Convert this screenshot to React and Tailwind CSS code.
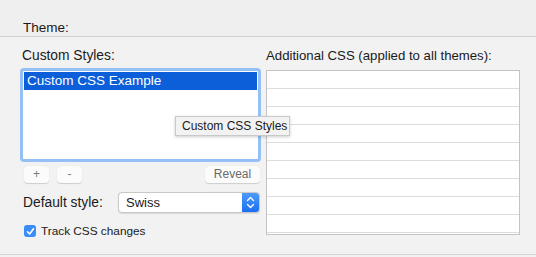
export default function App() {
  const rows = Array.from({ length: 9 })
  return (
    <div className="w-[536px] h-[257px] overflow-hidden bg-[#f2f2f2] text-[13px] text-[#1a1a1a] font-['Liberation_Sans',Arial,sans-serif] relative">
      <div className="h-[37px] bg-[#efefef] border-b border-[#d0d0d0] pl-[23px] pt-[20px] leading-[16px] text-[13.5px]">
        Theme:
      </div>

      <div className="flex gap-[5px] pl-[20px] pt-[10px] h-[218px] border-b border-[#d4d4d4]">
        <div className="w-[241px] flex flex-col">
          <div className="pl-[2px] leading-[18px] mb-[3px] text-[13.8px]">Custom Styles:</div>
          <div className="h-[94px] rounded-[4px] border-[3px] border-[#94c0f6] bg-white p-px">
            <div className="h-[18px] bg-[#0c5fd9] text-white pl-[3px] leading-[18px] text-[13.5px]">
              Custom CSS Example
            </div>
          </div>
          <div className="flex items-center mt-[4px] pl-[4px] pr-[1px]">
            <button className="w-[25px] h-[17px] rounded-[4px] bg-[#fbfbfb] shadow-[0_0.5px_1px_rgba(0,0,0,0.15)] text-[#7a7a7a] text-[12px] leading-[17px]">+</button>
            <button className="w-[25px] h-[17px] ml-[8px] rounded-[4px] bg-[#fbfbfb] shadow-[0_0.5px_1px_rgba(0,0,0,0.15)] text-[#7a7a7a] text-[12px] leading-[17px]">-</button>
            <button className="ml-auto w-[55px] h-[17px] rounded-[4px] bg-[#fbfbfb] shadow-[0_0.5px_1px_rgba(0,0,0,0.15)] text-[#6a6a6a] text-[12px] leading-[17px]">Reveal</button>
          </div>
          <div className="flex items-center mt-[9px] pl-[3px] pr-[1px]">
            <span className="w-[95px] leading-[21px] text-[13.8px]">Default style:</span>
            <div className="flex-1 h-[21px] flex rounded-[4px] border border-[#c8c8c8] bg-white overflow-hidden shadow-[0_0.5px_1px_rgba(0,0,0,0.1)]">
              <span className="flex-1 pl-[7px] leading-[19px]">Swiss</span>
              <div className="w-[17px] bg-gradient-to-b from-[#4e9af8] to-[#1a6ff0] flex items-center justify-center">
                <svg width="9" height="15" viewBox="0 0 9 15" fill="none" stroke="white" strokeWidth="1.4" strokeLinecap="round" strokeLinejoin="round">
                  <path d="M1.5 5.5 L4.5 2.5 L7.5 5.5" />
                  <path d="M1.5 9.5 L4.5 12.5 L7.5 9.5" />
                </svg>
              </div>
            </div>
          </div>
          <div className="flex items-center mt-[11px] pl-[4px]">
            <div className="w-[12px] h-[12px] rounded-[3px] bg-[#3a8cf6] flex items-center justify-center">
              <svg width="9" height="9" viewBox="0 0 9 9" fill="none" stroke="white" strokeWidth="1.6" strokeLinecap="round" strokeLinejoin="round">
                <path d="M1.5 4.8 L3.6 7 L7.5 1.8" />
              </svg>
            </div>
            <span className="ml-[5px] text-[11.8px] leading-[14px]">Track CSS changes</span>
          </div>
        </div>

        <div className="w-[254px] flex flex-col">
          <div className="leading-[18px] mb-[5px] text-[13.2px] whitespace-nowrap">Additional CSS (applied to all themes):</div>
          <div className="h-[165px] border border-[#c4c4c4] bg-white overflow-hidden">
            {rows.map((_, i) => (
              <div key={i} className="h-[18px] border-b border-[#dcdcdc]" />
            ))}
          </div>
        </div>
      </div>

      <div className="absolute left-[175px] top-[116px] w-[115px] h-[20px] bg-[#f2f2f2] border border-[#c9c9c9] shadow-[0_1px_3px_rgba(0,0,0,0.2)] text-[12px] leading-[18px] pl-[6px] whitespace-nowrap">
        Custom CSS Styles
      </div>
    </div>
  )
}
